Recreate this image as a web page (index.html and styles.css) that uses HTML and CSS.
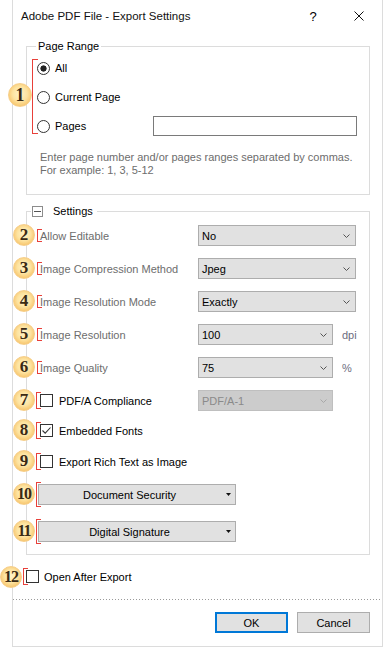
FILE: index.html
```html
<!DOCTYPE html>
<html lang="en">
<head>
    <meta charset="UTF-8">
    <meta name="viewport" content="width=device-width, initial-scale=1.0">
    <title>Adobe PDF File - Export Settings</title>
    <link rel="stylesheet" href="styles.css">
</head>
<body>
    <div class="window">
        <div class="titlebar">
            <span class="title">Adobe PDF File - Export Settings</span>
            <span class="cap-btn help-btn">?</span>
            <span class="cap-btn">
                <svg width="10" height="10" viewBox="0 0 10 10"><path d="M0.5 0.5L9.5 9.5M9.5 0.5L0.5 9.5" stroke="#111" stroke-width="1" fill="none"/></svg>
            </span>
        </div>

        <div class="content">
            <!-- 页面范围 -->
            <fieldset class="group range-group">
                <legend>Page Range</legend>
                <div class="range">
                    <span class="badge badge-lg">1</span>
                    <span class="brace brace-range"></span>
                    <div class="opt"><span class="radio on"></span>All</div>
                    <div class="opt"><span class="radio"></span>Current Page</div>
                    <div class="opt"><span class="radio"></span>Pages<input class="page-input" type="text"></div>
                </div>
                <p class="help">Enter page number and/or pages ranges separated by commas.<br>For example: 1, 3, 5-12</p>
            </fieldset>

            <!-- 设置 -->
            <fieldset class="group settings-group">
                <legend><span class="collapse"></span>Settings</legend>

                <div class="row">
                    <span class="badge">2</span><span class="brace"></span>
                    <span class="label">Allow Editable</span>
                    <div class="select"><span>No</span><svg class="chev" width="7" height="4" viewBox="0 0 7 4"><path d="M0.5 0.5L3.5 3.5L6.5 0.5"/></svg></div>
                </div>
                <div class="row">
                    <span class="badge">3</span><span class="brace"></span>
                    <span class="label">Image Compression Method</span>
                    <div class="select"><span>Jpeg</span><svg class="chev" width="7" height="4" viewBox="0 0 7 4"><path d="M0.5 0.5L3.5 3.5L6.5 0.5"/></svg></div>
                </div>
                <div class="row">
                    <span class="badge">4</span><span class="brace"></span>
                    <span class="label">Image Resolution Mode</span>
                    <div class="select"><span>Exactly</span><svg class="chev" width="7" height="4" viewBox="0 0 7 4"><path d="M0.5 0.5L3.5 3.5L6.5 0.5"/></svg></div>
                </div>
                <div class="row">
                    <span class="badge">5</span><span class="brace"></span>
                    <span class="label">Image Resolution</span>
                    <div class="select short"><span>100</span><svg class="chev" width="7" height="4" viewBox="0 0 7 4"><path d="M0.5 0.5L3.5 3.5L6.5 0.5"/></svg></div>
                    <span class="unit">dpi</span>
                </div>
                <div class="row">
                    <span class="badge">6</span><span class="brace"></span>
                    <span class="label">Image Quality</span>
                    <div class="select short"><span>75</span><svg class="chev" width="7" height="4" viewBox="0 0 7 4"><path d="M0.5 0.5L3.5 3.5L6.5 0.5"/></svg></div>
                    <span class="unit">%</span>
                </div>
                <div class="row">
                    <span class="badge">7</span><span class="brace brace-check"></span>
                    <span class="check-label"><span class="check"></span>PDF/A Compliance</span>
                    <div class="select short disabled"><span>PDF/A-1</span><svg class="chev" width="7" height="4" viewBox="0 0 7 4"><path d="M0.5 0.5L3.5 3.5L6.5 0.5"/></svg></div>
                </div>
                <div class="row gap-9">
                    <span class="badge">8</span><span class="brace brace-check"></span>
                    <span class="check-label">
                        <span class="check"><svg width="11" height="11" viewBox="0 0 11 11"><path d="M1.5 5.5L4.2 8.2L9.5 2.5" stroke="#333" stroke-width="1.1" fill="none"/></svg></span>Embedded Fonts
                    </span>
                </div>
                <div class="row gap-10">
                    <span class="badge">9</span><span class="brace brace-check"></span>
                    <span class="check-label"><span class="check"></span>Export Rich Text as Image</span>
                </div>
                <div class="row btn-row">
                    <span class="badge badge-2d">10</span><span class="brace brace-btn"></span>
                    <div class="drop-btn"><span>Document Security</span><svg class="tri" width="5" height="3" viewBox="0 0 5 3"><path d="M0 0H5L2.5 3Z"/></svg></div>
                </div>
                <div class="row btn-row gap-16">
                    <span class="badge badge-2d">11</span><span class="brace brace-btn"></span>
                    <div class="drop-btn"><span>Digital Signature</span><svg class="tri" width="5" height="3" viewBox="0 0 5 3"><path d="M0 0H5L2.5 3Z"/></svg></div>
                </div>
            </fieldset>

            <div class="open-row">
                <span class="badge badge-2d badge-open">12</span><span class="brace brace-open"></span>
                <span class="check"></span>Open After Export
            </div>
        </div>

        <div class="sep"></div>

        <div class="footer">
            <button type="button" class="btn btn-default">OK</button>
            <button type="button" class="btn">Cancel</button>
        </div>
    </div>
</body>
</html>
```

FILE: styles.css
```css
body {
    margin: 0;
    background-color: #fff;
    font-family: "Liberation Sans", Arial, sans-serif;
    font-size: 11px;
    color: #000;
}
.window {
    margin-left: 12px;
    width: 371px;
    height: 647px;
    box-sizing: border-box;
    border: 1px solid #dcdcdc;
    border-top: none;
    display: flex;
    flex-direction: column;
}
.titlebar {
    height: 32px;
    display: flex;
    align-items: center;
    padding-left: 8px;
}
.title {
    flex: 1;
    font-size: 11.5px;
    color: #111;
}
.cap-btn {
    width: 46px;
    height: 32px;
    display: flex;
    align-items: center;
    justify-content: center;
}
.help-btn {
    font-size: 13px;
}
.content {
    padding: 0 12px 0 13px;
}
.group {
    margin: 0;
    padding: 0;
    min-width: 0;
    border: 1px solid #dcdcdc;
}
.group legend {
    line-height: 13px;
}
.range-group {
    margin-top: 8px;
    padding-top: 5px;
}
.range-group legend {
    margin-left: 9px;
    padding: 0 2px;
}
.range {
    position: relative;
    display: flex;
    flex-direction: column;
    gap: 9px;
    padding: 0 12px 0 10px;
}
.opt {
    display: flex;
    align-items: center;
    height: 20px;
}
.radio {
    width: 13px;
    height: 13px;
    box-sizing: border-box;
    border: 1px solid #333;
    border-radius: 50%;
    margin-right: 5px;
}
.radio.on {
    background: radial-gradient(circle, #222 2.8px, transparent 3.4px);
}
.page-input {
    margin-left: auto;
    width: 204px;
    height: 20px;
    box-sizing: border-box;
    padding: 0 3px;
    border: 1px solid #7a7a7a;
    font: inherit;
}
.help {
    margin: 0;
    padding: 15px 0 17px 13px;
    line-height: 13px;
    color: #6d6d6d;
}

.settings-group {
    margin-top: 10px;
    padding: 7px 0 12px;
}
.settings-group legend {
    margin-left: 4px;
    padding: 0 4px 0 1px;
}
.collapse {
    display: inline-block;
    vertical-align: -2px;
    width: 11px;
    height: 11px;
    box-sizing: border-box;
    margin-right: 10px;
    border: 1px solid #8c8c8c;
    background: linear-gradient(#555, #555) center / 7px 1px no-repeat;
}
.row {
    position: relative;
    display: flex;
    align-items: center;
    height: 21px;
    padding-left: 13px;
}
.row + .row {
    margin-top: 12px;
}
.row.gap-9 { margin-top: 9px; }
.row.gap-10 { margin-top: 10px; }
.row.gap-16 { margin-top: 16px; }
.row.btn-row {
    padding-left: 11px;
}
.label {
    width: 158px;
    color: #6d6d6d;
}
.select {
    width: 158px;
    height: 21px;
    box-sizing: border-box;
    display: flex;
    align-items: center;
    padding: 0 5px 0 3px;
    border: 1px solid #adadad;
    background-color: #e1e1e1;
}
.select.short {
    width: 135px;
}
.select.disabled {
    background-color: #cccccc;
    border-color: #bfbfbf;
    color: #8a8a8a;
}
.chev {
    margin-left: auto;
    fill: none;
    stroke: #555;
    stroke-width: 1;
}
.disabled .chev {
    stroke: #a8a8a8;
}
.unit {
    margin-left: 9px;
    color: #6d6d80;
}
.check-label {
    width: 158px;
    display: flex;
    align-items: center;
}
.check {
    width: 13px;
    height: 13px;
    box-sizing: border-box;
    border: 1px solid #333;
    margin-right: 6px;
    flex: none;
}
.check svg {
    display: block;
}
.drop-btn {
    width: 198px;
    height: 21px;
    box-sizing: border-box;
    display: flex;
    align-items: center;
    padding-right: 4px;
    border: 1px solid #adadad;
    background-color: #e1e1e1;
}
.drop-btn span {
    flex: 1;
    text-align: center;
}
.tri {
    margin-left: 6px;
    fill: #111;
}
.open-row {
    position: relative;
    display: flex;
    align-items: center;
    height: 21px;
    margin-top: 11px;
}
.open-row .check {
    margin-right: 5px;
}

/* 标注 */
.badge {
    position: absolute;
    left: -14px;
    top: -1px;
    width: 22px;
    height: 22px;
    box-sizing: border-box;
    border-radius: 50%;
    border: 1px solid #f7cf8a;
    background: radial-gradient(circle at 50% 45%, #fff3c8 0%, #fde3a0 45%, #f6bd5e 85%, #f0a848 100%);
    display: flex;
    align-items: center;
    justify-content: center;
    font-family: "Liberation Serif", "Times New Roman", serif;
    font-weight: bold;
    font-size: 17px;
    color: #3a2a14;
}
.badge-lg {
    left: -19px;
    top: 25px;
    width: 24px;
    height: 24px;
    font-size: 18px;
}
.badge-2d {
    letter-spacing: -1px;
    font-size: 16px;
}
.badge-open {
    left: -26px;
    top: 0;
}
.brace {
    position: absolute;
    left: 10px;
    top: 4px;
    width: 5px;
    height: 13px;
    box-sizing: border-box;
    border: 1px solid #e8403a;
    border-right: none;
}
.brace-range {
    left: 5px;
    top: 1px;
    width: 6px;
    height: 75px;
}
.brace-check {
    left: 9px;
    top: 2px;
    height: 17px;
}
.brace-btn {
    left: 9px;
    top: -2px;
    height: 25px;
}
.brace-open {
    left: -3px;
    top: 2px;
    height: 17px;
}

.sep {
    height: 1px;
    margin-top: 12px;
    background-image: linear-gradient(to right, #9a9a9a 1px, transparent 1px);
    background-size: 3px 1px;
}
.footer {
    display: flex;
    justify-content: flex-end;
    gap: 9px;
    padding: 12px 12px 0;
}
.btn {
    width: 73px;
    height: 21px;
    box-sizing: border-box;
    padding: 0;
    border: 1px solid #adadad;
    background-color: #e1e1e1;
    font: inherit;
    color: #000;
}
.btn-default {
    border: 2px solid #0078d7;
}
```
